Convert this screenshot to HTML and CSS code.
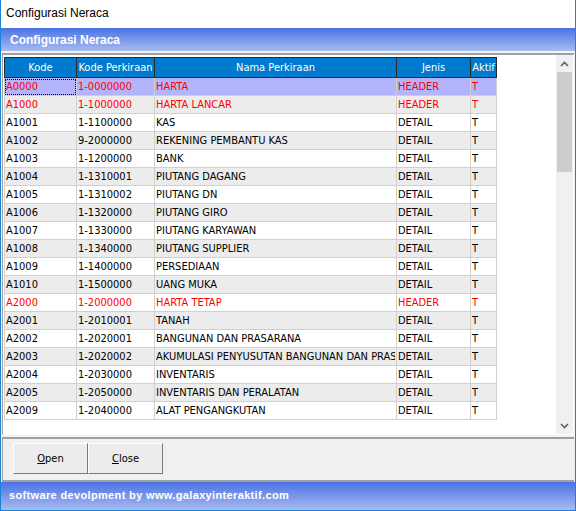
FILE: index.html
```html
<!DOCTYPE html>
<html lang="id">
  <head>
    <meta charset="UTF-8" />
    <title>Configurasi Neraca</title>
    <link rel="stylesheet" href="styles.css">
  </head>
  <body>
    <div class="window">
      <div class="titlebar">Configurasi Neraca</div>
      <div class="band band-top">Configurasi Neraca</div>
      <div class="gridbox">
        <div class="grid">
          <table class="tbl">
            <colgroup>
              <col class="c-kode">
              <col class="c-perk">
              <col class="c-nama">
              <col class="c-jenis">
              <col class="c-aktif">
            </colgroup>
            <thead>
              <tr>
                <th>Kode</th>
                <th>Kode Perkiraan</th>
                <th>Nama Perkiraan</th>
                <th>Jenis</th>
                <th>Aktif</th>
              </tr>
            </thead>
            <tbody id="rows"></tbody>
          </table>
        </div>
        <div class="vscroll">
          <div class="arrow">
            <svg width="9" height="6" viewBox="0 0 9 6"><path d="M1 5 L4.5 1.5 L8 5" fill="none" stroke="#606060" stroke-width="1.6"/></svg>
          </div>
          <div class="track"><div class="thumb"></div></div>
          <div class="arrow">
            <svg width="9" height="6" viewBox="0 0 9 6"><path d="M1 1 L4.5 4.5 L8 1" fill="none" stroke="#606060" stroke-width="1.6"/></svg>
          </div>
        </div>
      </div>
      <div class="buttons">
        <button class="btn"><u>O</u>pen</button>
        <button class="btn"><u>C</u>lose</button>
      </div>
      <div class="band band-bottom">software devolpment by www.galaxyinteraktif.com</div>
    </div>
    <script>
      var data = [
        ['A0000', '1-0000000', 'HARTA', 'HEADER'],
        ['A1000', '1-1000000', 'HARTA LANCAR', 'HEADER'],
        ['A1001', '1-1100000', 'KAS', 'DETAIL'],
        ['A1002', '9-2000000', 'REKENING PEMBANTU KAS', 'DETAIL'],
        ['A1003', '1-1200000', 'BANK', 'DETAIL'],
        ['A1004', '1-1310001', 'PIUTANG DAGANG', 'DETAIL'],
        ['A1005', '1-1310002', 'PIUTANG DN', 'DETAIL'],
        ['A1006', '1-1320000', 'PIUTANG GIRO', 'DETAIL'],
        ['A1007', '1-1330000', 'PIUTANG KARYAWAN', 'DETAIL'],
        ['A1008', '1-1340000', 'PIUTANG SUPPLIER', 'DETAIL'],
        ['A1009', '1-1400000', 'PERSEDIAAN', 'DETAIL'],
        ['A1010', '1-1500000', 'UANG MUKA', 'DETAIL'],
        ['A2000', '1-2000000', 'HARTA TETAP', 'HEADER'],
        ['A2001', '1-2010001', 'TANAH', 'DETAIL'],
        ['A2002', '1-2020001', 'BANGUNAN DAN PRASARANA', 'DETAIL'],
        ['A2003', '1-2020002', 'AKUMULASI PENYUSUTAN BANGUNAN DAN PRASARANA', 'DETAIL'],
        ['A2004', '1-2030000', 'INVENTARIS', 'DETAIL'],
        ['A2005', '1-2050000', 'INVENTARIS DAN PERALATAN', 'DETAIL'],
        ['A2009', '1-2040000', 'ALAT PENGANGKUTAN', 'DETAIL']
      ]
      var html = ''
      for (var i = 0; i < data.length; i++) {
        var d = data[i]
        var cls = i % 2 ? 'alt' : ''
        if (d[3] == 'HEADER') cls += ' red'
        if (i == 0) cls += ' sel'
        html += '<tr class="' + cls + '">' +
          '<td><span class="focus">' + d[0] + '</span></td>' +
          '<td>' + d[1] + '</td>' +
          '<td><div class="clip">' + d[2] + '</div></td>' +
          '<td>' + d[3] + '</td>' +
          '<td>T</td></tr>'
      }
      document.getElementById('rows').innerHTML = html
    </script>
  </body>
</html>
```

FILE: styles.css
```css
* {
  margin: 0;
  padding: 0;
  box-sizing: border-box;
}

html,
body {
  width: 576px;
  height: 511px;
  overflow: hidden;
  background: #fff;
}

.window {
  width: 576px;
  height: 511px;
  border-left: 1px solid #1883d7;
  border-right: 1px solid #1883d7;
  border-bottom: 1px solid #1883d7;
  background: #f0f0f0;
  display: flex;
  flex-direction: column;
  font-family: "Liberation Sans", Arial, sans-serif;
}

.titlebar {
  height: 28px;
  background: #fff;
  font-family: "Liberation Sans", Arial, sans-serif;
  font-size: 12px;
  line-height: 26px;
  padding-left: 5px;
  color: #000;
}

.band {
  background: linear-gradient(#4a72e4, #a7bbf0);
  color: #fff;
  font-weight: bold;
  font-family: "Liberation Sans", Arial, sans-serif;
}

.band-top {
  height: 25px;
  font-size: 12px;
  line-height: 25px;
  padding-left: 9px;
  border-bottom: 2px solid #f4f4f4;
}

.gridbox {
  height: 382px;
  margin: 0 1px;
  border-top: 2px solid #a0a0a0;
  border-left: 1px solid #a0a0a0;
  border-bottom: 1px solid #fff;
  background: #fff;
  display: flex;
}

.grid {
  flex: 1;
  padding: 2px 0 0 1px;
  overflow: hidden;
}

.tbl {
  width: 492px;
  border-collapse: collapse;
  table-layout: fixed;
  font-family: "DejaVu Sans Condensed", "DejaVu Sans", sans-serif;
  font-size: 11px;
  color: #000;
}

.c-kode { width: 72px; }
.c-perk { width: 78px; }
.c-nama { width: 242px; }
.c-jenis { width: 74px; }
.c-aktif { width: 26px; }

.tbl th {
  height: 20px;
  background: #007acc;
  color: #fff;
  font-weight: normal;
  border: 1px solid #2a2a2a;
  text-align: center;
  padding: 0;
  white-space: nowrap;
  overflow: hidden;
}

.tbl td {
  height: 18px;
  border: 1px solid #d0d0d0;
  padding: 0 1px;
  white-space: nowrap;
  overflow: hidden;
}

.clip {
  overflow: hidden;
  white-space: nowrap;
}

.tbl tr.alt td {
  background: #ececec;
}

.tbl tr.red td {
  color: #f00;
}

.tbl tr.sel td {
  background: #b4b4fa;
}

.tbl tr.sel .focus {
  display: block;
  margin: 0 -1px;
  padding: 0 1px;
  outline: 1px dotted #000;
  outline-offset: -1px;
  line-height: 16px;
}

.vscroll {
  width: 17px;
  margin-right: 1px;
  background: #f0f0f0;
  display: flex;
  flex-direction: column;
}

.arrow {
  height: 17px;
  display: flex;
  align-items: center;
  justify-content: center;
}

.track {
  flex: 1;
}

.thumb {
  margin: 0 1px;
  height: 100px;
  background: #cdcdcd;
}

.buttons {
  height: 45px;
  margin: 2px 1px 0;
  border-top: 2px solid #a0a0a0;
  border-left: 1px solid #a0a0a0;
  border-bottom: 2px solid #a0a0a0;
  padding: 4px 0 0 10px;
  display: flex;
  align-items: flex-start;
}

.btn {
  width: 75px;
  height: 31px;
  background: #ececec;
  border: 1px solid;
  border-color: #fff #7a7a7a #7a7a7a #fff;
  font-family: "DejaVu Sans Condensed", "DejaVu Sans", sans-serif;
  font-size: 11px;
  color: #000;
}

.band-bottom {
  flex: 1;
  font-size: 11px;
  letter-spacing: 0.35px;
  line-height: 26px;
  padding-left: 8px;
}
```
